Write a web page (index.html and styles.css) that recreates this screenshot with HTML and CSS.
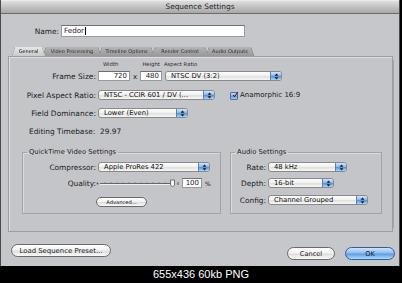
FILE: index.html
```html
<!DOCTYPE html>
<html>
<head>
<meta charset="utf-8">
<title>Sequence Settings</title>
<link rel="stylesheet" href="styles.css">
</head>
<body>
<div class="window">
  <div class="titlebar">Sequence Settings</div>
  <div class="name-row">
    <span class="name-lbl">Name:</span>
    <div class="text-field name-field">Fedor<span class="caret"></span></div>
  </div>
  <div class="tabs">
    <div class="tab active" style="width:33px">General</div>
    <div class="tab" style="width:58px">Video Processing</div>
    <div class="tab" style="width:55px">Timeline Options</div>
    <div class="tab" style="width:56px">Render Control</div>
    <div class="tab" style="width:48px">Audio Outputs</div>
  </div>
  <div class="panel">
    <div class="colheads">
      <span class="ch-w">Width</span><span class="ch-h">Height</span><span class="ch-a">Aspect Ratio</span>
    </div>
    <div class="row frame-row">
      <span class="lbl">Frame Size:</span>
      <div class="num num-w">720</div>
      <span class="times">x</span>
      <div class="num num-h">480</div>
      <div class="popup p-ar">NTSC DV (3:2)<span class="cap"><svg width="5" height="7" viewBox="0 0 5 7"><path d="M2.5 0.5 L4.5 2.8 L0.5 2.8 Z M0.5 4.2 L4.5 4.2 L2.5 6.5 Z" fill="#1c1c1c"/></svg></span></div>
    </div>
    <div class="row par-row">
      <span class="lbl">Pixel Aspect Ratio:</span>
      <div class="popup p-par">NTSC - CCIR 601 / DV (...<span class="cap"><svg width="5" height="7" viewBox="0 0 5 7"><path d="M2.5 0.5 L4.5 2.8 L0.5 2.8 Z M0.5 4.2 L4.5 4.2 L2.5 6.5 Z" fill="#1c1c1c"/></svg></span></div>
      <span class="checkbox"><svg width="8" height="8" viewBox="0 0 8 8"><path d="M1.5 4 L3.3 6.3 L7.5 0.3" stroke="#111" stroke-width="1.3" fill="none"/></svg></span>
      <span class="check-lbl">Anamorphic 16:9</span>
    </div>
    <div class="row fd-row">
      <span class="lbl">Field Dominance:</span>
      <div class="popup p-fd">Lower (Even)<span class="cap"><svg width="5" height="7" viewBox="0 0 5 7"><path d="M2.5 0.5 L4.5 2.8 L0.5 2.8 Z M0.5 4.2 L4.5 4.2 L2.5 6.5 Z" fill="#1c1c1c"/></svg></span></div>
    </div>
    <div class="row et-row">Editing Timebase:&nbsp; 29.97</div>
    <div class="groups">
      <fieldset class="group qt-group">
        <legend>QuickTime Video Settings</legend>
        <div class="grow comp-row">
          <span class="glbl qt-lbl">Compressor:</span>
          <div class="popup p-comp">Apple ProRes 422<span class="cap"><svg width="5" height="7" viewBox="0 0 5 7"><path d="M2.5 0.5 L4.5 2.8 L0.5 2.8 Z M0.5 4.2 L4.5 4.2 L2.5 6.5 Z" fill="#1c1c1c"/></svg></span></div>
        </div>
        <div class="grow qual-row">
          <span class="glbl qt-lbl">Quality:</span>
          <svg class="slider" width="84" height="9" viewBox="0 0 84 9">
            <circle cx="1.5" cy="4.5" r="1" fill="#555"/>
            <line x1="4" y1="4.5" x2="78" y2="4.5" stroke="#666" stroke-width="1"/>
            <line x1="4" y1="5.5" x2="78" y2="5.5" stroke="#eee" stroke-width="1"/>
            <g stroke="#777" stroke-width="0.8">
              <line x1="9" y1="3" x2="9" y2="4"/><line x1="15" y1="3" x2="15" y2="4"/><line x1="21" y1="3" x2="21" y2="4"/><line x1="27" y1="3" x2="27" y2="4"/><line x1="33" y1="3" x2="33" y2="4"/><line x1="39" y1="3" x2="39" y2="4"/><line x1="45" y1="3" x2="45" y2="4"/><line x1="51" y1="3" x2="51" y2="4"/><line x1="57" y1="3" x2="57" y2="4"/><line x1="63" y1="3" x2="63" y2="4"/><line x1="69" y1="3" x2="69" y2="4"/>
            </g>
            <path d="M74.5 1 L78.5 1 L78.5 6 L76.5 8 L74.5 6 Z" fill="#f4f4f4" stroke="#555" stroke-width="0.8"/>
            <line x1="82" y1="3" x2="82" y2="6" stroke="#555" stroke-width="1"/>
          </svg>
          <div class="num num-q">100</div>
          <span class="pct">%</span>
        </div>
        <div class="grow adv-row">
          <span class="btn btn-small">Advanced...</span>
        </div>
      </fieldset>
      <fieldset class="group au-group">
        <legend>Audio Settings</legend>
        <div class="grow comp-row">
          <span class="glbl au-lbl">Rate:</span>
          <div class="popup p-rate">48 kHz<span class="cap"><svg width="5" height="7" viewBox="0 0 5 7"><path d="M2.5 0.5 L4.5 2.8 L0.5 2.8 Z M0.5 4.2 L4.5 4.2 L2.5 6.5 Z" fill="#1c1c1c"/></svg></span></div>
        </div>
        <div class="grow qual-row">
          <span class="glbl au-lbl">Depth:</span>
          <div class="popup p-depth">16-bit<span class="cap"><svg width="5" height="7" viewBox="0 0 5 7"><path d="M2.5 0.5 L4.5 2.8 L0.5 2.8 Z M0.5 4.2 L4.5 4.2 L2.5 6.5 Z" fill="#1c1c1c"/></svg></span></div>
        </div>
        <div class="grow config-row">
          <span class="glbl au-lbl">Config:</span>
          <div class="popup p-config">Channel Grouped<span class="cap"><svg width="5" height="7" viewBox="0 0 5 7"><path d="M2.5 0.5 L4.5 2.8 L0.5 2.8 Z M0.5 4.2 L4.5 4.2 L2.5 6.5 Z" fill="#1c1c1c"/></svg></span></div>
        </div>
      </fieldset>
    </div>
  </div>
  <div class="bottom-row">
    <span class="btn btn-load">Load Sequence Preset...</span>
    <span class="spacer"></span>
    <span class="btn btn-cancel">Cancel</span>
    <span class="btn btn-ok">OK</span>
  </div>
</div>
<div class="footer">655x436 60kb PNG</div>
</body>
</html>
```

FILE: styles.css
```css
html, body {
  margin: 0;
  padding: 0;
  background: #000;
}
body {
  width: 402px;
  height: 283px;
  overflow: hidden;
  font-family: "DejaVu Sans", sans-serif;
  color: #1a1a1a;
}
.window {
  width: 400px;
  height: 266px;
  box-sizing: border-box;
  background: #c6c7cb;
  border-left: 1px solid #4a4a4a;
  border-right: 1px solid #4a4a4a;
  display: flex;
  flex-direction: column;
  overflow: hidden;
}
.titlebar {
  height: 12px;
  flex: none;
  border-top: 1px solid #ececec;
  border-bottom: 1px solid #6c6c6c;
  box-sizing: content-box;
  background: linear-gradient(#dedede, #c2c2c2 50%, #a7a7a7);
  font-size: 7.4px;
  line-height: 12px;
  text-align: center;
  color: #1e1e1e;
}
.name-row {
  display: flex;
  align-items: center;
  margin-top: 11px;
  height: 12px;
  flex: none;
}
.name-lbl {
  width: 58px;
  text-align: right;
  font-size: 7.4px;
  margin-right: 2px;
}
.text-field {
  box-sizing: border-box;
  background: #fff;
  border: 1px solid #9a9a9a;
  border-top-color: #707070;
}
.name-field {
  width: 184px;
  height: 12px;
  font-size: 7.2px;
  line-height: 10px;
  padding-left: 2px;
  display: flex;
  align-items: center;
}
.caret {
  display: inline-block;
  width: 1px;
  height: 8px;
  background: #000;
  margin-left: 0.5px;
}
.tabs {
  display: flex;
  margin-top: 10px;
  margin-left: 11px;
  height: 9px;
  flex: none;
  filter: drop-shadow(0 0 0.4px #3a3a3a);
  position: relative;
  z-index: 1;
}
.tab {
  height: 9px;
  box-sizing: border-box;
  margin-right: -2px;
  clip-path: polygon(0 100%, 3px 0, calc(100% - 3px) 0, 100% 100%);
  background: linear-gradient(#b4b4b4, #999999);
  color: #2c2c2c;
  font-size: 5px;
  line-height: 9px;
  text-align: center;
  white-space: nowrap;
}
.tab.active {
  background: linear-gradient(#e6e6e6, #c9cacd);
  z-index: 2;
  color: #111;
}
.panel {
  margin-left: 7px;
  width: 385px;
  height: 176px;
  flex: none;
  box-sizing: border-box;
  border: 1px solid #9d9ea2;
  box-shadow: inset 1px 1px 0 #dcdde0, 5px 0 0 -4px #a6a7ab;
  background: #c4c5c9;
  display: flex;
  flex-direction: column;
}
.colheads {
  height: 8px;
  margin-top: 3px;
  font-size: 5.3px;
  line-height: 8px;
  position: relative;
  color: #2a2a2a;
  display: flex;
}
.ch-w { margin-left: 94px; }
.ch-h { margin-left: 24px; }
.ch-a { margin-left: 4px; }
.row {
  display: flex;
  align-items: center;
  height: 10px;
  flex: none;
}
.lbl {
  width: 87px;
  margin-right: 2px;
  text-align: right;
  font-size: 7.5px;
  white-space: nowrap;
}
.frame-row { margin-top: 3px; }
.par-row { margin-top: 9px; }
.fd-row { margin-top: 8px; }
.et-row {
  margin-top: 9px;
  height: 9px;
  padding-left: 20px;
  font-size: 7.4px;
}
.num {
  box-sizing: border-box;
  height: 10px;
  background: #fff;
  border: 1px solid #9a9a9a;
  border-top-color: #6f6f6f;
  font-size: 7px;
  line-height: 8px;
  text-align: right;
  padding-right: 2px;
}
.num-w { width: 32px; }
.num-h { width: 22px; }
.times {
  font-size: 7px;
  width: 10px;
  text-align: center;
  margin-top: 2px;
}
.popup {
  box-sizing: border-box;
  height: 10px;
  display: flex;
  align-items: center;
  border: 1px solid #8a8a8a;
  border-radius: 3px;
  background: linear-gradient(#fefefe, #f1f1f1 45%, #e1e1e1 55%, #f7f7f7);
  font-size: 6.8px;
  padding-left: 5px;
  white-space: nowrap;
  overflow: hidden;
  color: #111;
}
.cap {
  margin-left: auto;
  width: 10px;
  align-self: stretch;
  border-left: 1px solid #5e80ae;
  border-radius: 0 2px 2px 0;
  background: linear-gradient(#d3e6fb, #8bbcee 45%, #5595e0 55%, #a6d6fb);
  display: flex;
  align-items: center;
  justify-content: center;
}
.p-ar { width: 117px; margin-left: 3px; }
.p-par { width: 117px; }
.p-fd { width: 90px; }
.p-comp { width: 112px; }
.p-rate { width: 79px; }
.p-depth { width: 66px; }
.p-config { width: 100px; }
.checkbox {
  width: 8px;
  height: 8px;
  box-sizing: border-box;
  margin-left: 15px;
  border: 1px solid #566e92;
  border-radius: 1px;
  background: linear-gradient(#c7def8, #76a9e6 50%, #5c95dc 51%, #a3cdf5);
  display: flex;
  align-items: center;
  justify-content: center;
  position: relative;
  top: 1px;
}
.checkbox svg { position: relative; top: -1px; left: 1px; }
.check-lbl {
  font-size: 7px;
  margin-left: 2px;
}
.groups {
  display: flex;
  margin-top: 12px;
  margin-left: 13px;
}
.group {
  margin: 0;
  padding: 0 0 6px 0;
  border: 1px solid #a2a3a7;
  box-shadow: 1px 1px 0 #dadbde inset;
  min-width: 0;
}
.group legend {
  font-size: 6.8px;
  line-height: 9px;
  padding: 0 2px;
  margin-left: 4px;
  color: #1a1a1a;
}
.qt-group { width: 199px; box-sizing: border-box; }
.au-group { width: 152px; margin-left: 9px; box-sizing: border-box; padding-bottom: 8px; }
.grow {
  display: flex;
  align-items: center;
  height: 10px;
}
.comp-row { margin-top: 5px; }
.qual-row { margin-top: 6px; }
.adv-row { margin-top: 9px; }
.config-row { margin-top: 7px; }
.glbl {
  margin-right: 2px;
  text-align: right;
  font-size: 7.4px;
  white-space: nowrap;
}
.qt-lbl { width: 73px; }
.au-lbl { width: 35px; }
.slider { display: block; margin-left: -2px; }
.num-q { width: 20px; margin-left: 2px; }
.pct { font-size: 6px; margin-left: 3px; }
.btn {
  box-sizing: border-box;
  display: inline-flex;
  align-items: center;
  justify-content: center;
  border: 1px solid #6a6a6a;
  border-radius: 7px;
  background: linear-gradient(#ffffff, #f2f2f2 45%, #dedede 55%, #fbfbfb);
  color: #1a1a1a;
  white-space: nowrap;
}
.btn-small {
  width: 51px;
  height: 10px;
  font-size: 5.2px;
  margin-left: 73px;
}
.bottom-row {
  display: flex;
  align-items: flex-start;
  margin-top: 12px;
  height: 16px;
  flex: none;
}
.btn-load {
  margin-left: 10px;
  width: 100px;
  height: 13px;
  font-size: 6.9px;
}
.spacer { flex: 1; }
.btn-cancel {
  margin-top: 3px;
  width: 48px;
  height: 13px;
  font-size: 6.6px;
}
.btn-ok {
  margin-top: 3px;
  margin-left: 10px;
  margin-right: 4px;
  width: 50px;
  height: 13px;
  font-size: 6.6px;
  border-color: #3b5b94;
  background: linear-gradient(#cfe4fb, #8ebdf0 45%, #5d9ce6 55%, #acdcfd);
}
.footer {
  height: 17px;
  color: #fff;
  font-family: "Liberation Sans", Arial, sans-serif;
  font-size: 11px;
  line-height: 17px;
  text-align: center;
}
```
